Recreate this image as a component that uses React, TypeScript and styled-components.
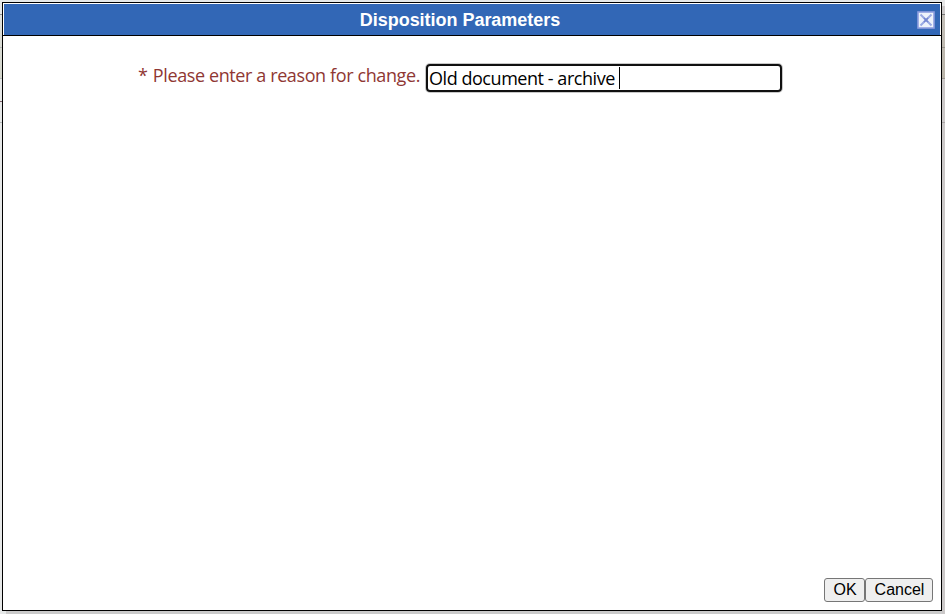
import React from "react";
import styled, { createGlobalStyle } from "styled-components";

const GlobalStyle = createGlobalStyle`
  * { box-sizing: border-box; }
  body { margin: 0; overflow: hidden; }
`;

const Page = styled.div`
  display: grid;
  grid-template-columns: 2px 940px 3px;
  grid-template-rows: 2px 609px 3px;
  width: 945px;
  height: 614px;
  background: #e5e8e8;
`;

const Edge = styled.div<{ $side: "left" | "right" }>`
  grid-row: 1 / 4;
  grid-column: ${(p) => (p.$side === "left" ? 1 : 3)};
  background: ${(p) =>
    p.$side === "left"
      ? `linear-gradient(#8f9292, #8f9292) 0 14px / 100% 1px no-repeat,
         linear-gradient(#b5b8b8, #b5b8b8) 0 47px / 100% 1px no-repeat,
         linear-gradient(#b5b8b8, #b5b8b8) 0 78px / 100% 1px no-repeat,
         linear-gradient(#7d6068, #7d6068) 0 101px / 100% 1px no-repeat,
         linear-gradient(#b5b8b8, #b5b8b8) 0 122px / 100% 1px no-repeat,
         linear-gradient(#e0e2de, #d3d5cb) 0 15px / 100% 63px no-repeat, #e6e8e8`
      : `linear-gradient(#777, #777) 0 14px / 100% 1px no-repeat,
         linear-gradient(#99958f, #99958f) 0 47px / 100% 1px no-repeat,
         linear-gradient(#99958f, #99958f) 0 78px / 100% 1px no-repeat,
         linear-gradient(#aaa6a6, #aaa6a6) 0 122px / 100% 1px no-repeat,
         linear-gradient(#e6e6e6, #e6e6e6) 0 0 / 100% 6px no-repeat,
         linear-gradient(#c3bfb8, #b9b4a9) 0 15px / 100% 63px no-repeat, #cbc8c8`};
`;

const Shadow = styled.div`
  grid-row: 3;
  grid-column: 2;
  margin-left: 4px;
  background: #cbcbcb;
`;

const Dialog = styled.section`
  grid-row: 2;
  grid-column: 2;
  display: flex;
  flex-direction: column;
  border: 1px solid #000;
  background: #fff;
`;

const Header = styled.header`
  flex: none;
  padding: 1px 1px 0;
  border-bottom: 1px solid #000;
`;

const TitleBar = styled.div`
  display: grid;
  grid-template-columns: 1fr auto;
  align-items: center;
  height: 31px;
  padding-right: 5px;
  background: #3267b6;
`;

const Title = styled.h1`
  margin: 0;
  text-align: center;
  font: bold 18px/29px "Liberation Sans", Arial, sans-serif;
  letter-spacing: -0.03px;
  color: #fff;
  padding: 2px 1px 0 0;
`;

const CloseButton = styled.button`
  display: block;
  width: 18px;
  height: 18px;
  padding: 0;
  border: 0;
  background: none;
  svg { display: block; }
`;

const Body = styled.main`
  flex: 1;
  display: flex;
  align-items: flex-start;
  padding: 28px 0 0 135px;
`;

const Label = styled.label`
  width: 288px;
  flex: none;
  font: 18px/22px "Open Sans", Tahoma, sans-serif;
  letter-spacing: -0.39px;
  color: #8f3733;
  white-space: pre;
`;

const Asterisk = styled.span`
  margin-right: 1px;
`;

const Field = styled.div`
  display: flex;
  align-items: center;
  width: 356px;
  height: 28px;
  padding-left: 1px;
  border: 2px solid #101010;
  border-radius: 4px;
  box-shadow: 0 0 0 1px #c8c8c8;
  font: 18px/23px "Open Sans", Tahoma, sans-serif;
  letter-spacing: -0.45px;
  color: #000;
`;

const Value = styled.span`
  width: 190px;
  white-space: pre;
`;

const Caret = styled.span`
  width: 1px;
  height: 22px;
  background: #000;
`;

const Footer = styled.footer`
  display: flex;
  justify-content: flex-end;
  padding: 0 8px 8px 0;
`;

const Button = styled.button<{ $width: number }>`
  width: ${(p) => p.$width}px;
  height: 24px;
  padding: 0 0 0 1px;
  border: 1px solid #767676;
  border-radius: 3px;
  background: #efefef;
  color: #000;
  font: 16px/20px "Liberation Sans", Arial, sans-serif;
`;

export default function App() {
  return (
    <>
      <GlobalStyle />
      <Page>
        <Edge $side="left" />
        <Dialog role="dialog" aria-labelledby="title">
          <Header>
            <TitleBar>
              <Title id="title">Disposition Parameters</Title>
              <CloseButton aria-label="Close">
                <svg width="18" height="18" viewBox="0 0 18 18">
                  <rect x="1" y="1" width="16" height="16" fill="#eef3fb" stroke="#8f9fe0" strokeWidth="1.6" />
                  <path d="M3.5 3.5 14.5 14.5M14.5 3.5 3.5 14.5" stroke="#9aaae4" strokeWidth="2" />
                  <path d="M7 7 11 11M11 7 7 11" stroke="#7486d0" strokeWidth="1.6" />
                </svg>
              </CloseButton>
            </TitleBar>
          </Header>
          <Body>
            <Label>
              <Asterisk>*</Asterisk> Please enter a reason for change.
            </Label>
            <Field role="textbox">
              <Value>Old document - archive </Value>
              <Caret />
            </Field>
          </Body>
          <Footer>
            <Button $width={41}>OK</Button>
            <Button $width={68}>Cancel</Button>
          </Footer>
        </Dialog>
        <Edge $side="right" />
        <Shadow />
      </Page>
    </>
  );
}
